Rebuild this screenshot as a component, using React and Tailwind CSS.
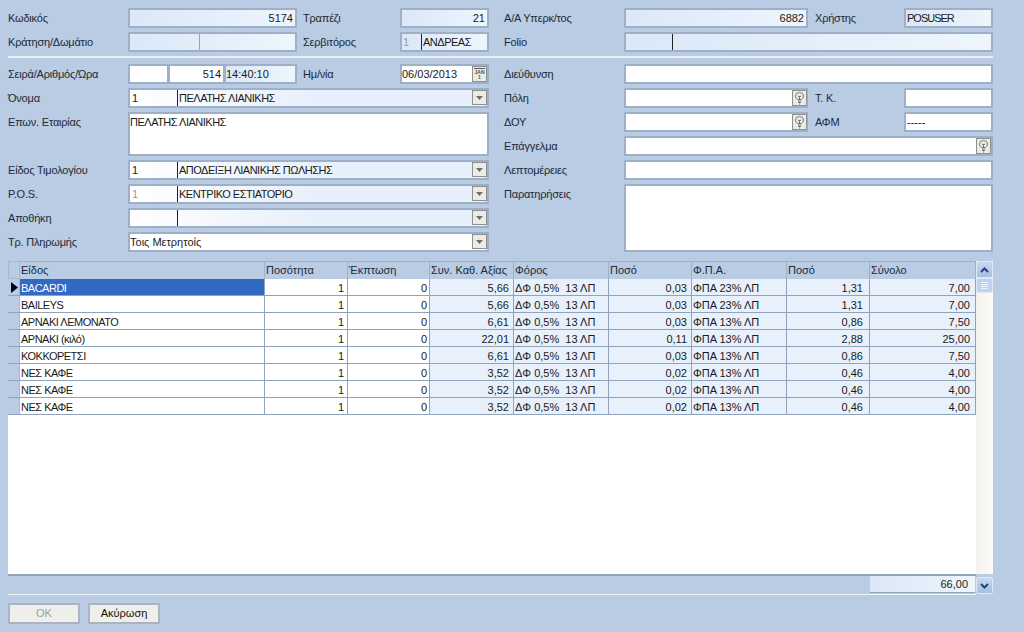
const font = "font-['Tahoma','Liberation_Sans',sans-serif]";
const caps = "tracking-[-0.5px]";

function Bulb({ offset = "right-0" }) {
  return (
    <span className={`absolute ${offset} top-0 flex h-[16px] w-[15px] items-center justify-center border border-[#8f8f8f] bg-[#ecebe4]`}>
      <svg width="9" height="13" viewBox="0 0 9 13" fill="none" stroke="#777" strokeWidth="1">
        <path d="M2.500 7.500C1 6.300.5 5.300.5 4a4 3.500 0 0 1 8 0c0 1.300-.5 2.300-2 3.500z" />
        <path d="M4.500 4v3.500M3 4l1.500 1L6 4M3 9h3M3 10.500h3M4 12h1" />
      </svg>
    </span>
  );
}

function Arrow() {
  return (
    <span className="absolute right-0 top-0 flex h-[15px] w-[15px] items-center justify-center border border-[#8f8f8f] bg-[#ecebe4]">
      <svg width="7" height="4" viewBox="0 0 7 4"><path d="M0 0h7L3.500 4z" fill="#6f6f6f" /></svg>
    </span>
  );
}

function Cal() {
  return (
    <span className="absolute right-0 top-0 flex h-[16px] w-[15px] flex-col items-center border border-[#8f8f8f] bg-[#ecebe4] pt-[1px]">
      <span className="h-px w-[11px] bg-[#555]" />
      <span className="text-[5px] font-bold leading-[6px] tracking-normal text-[#555]">JAN</span>
      <span className="text-[5px] font-bold leading-[5px] text-[#555]">1</span>
    </span>
  );
}

function Box({ w, h = "h-[20px]", bg = "bg-white", align = "text-left", children, extra = "" }) {
  return (
    <div className={`relative shrink-0 border-2 border-[#9db0c8] ${w} ${h} ${bg} ${align} ${extra} pr-[2px] leading-[16px] whitespace-nowrap text-[#1a1a1a]`}>
      {children}
    </div>
  );
}

const ro = "bg-gradient-to-r from-[#dbe8f7] to-[#eef5fd]";
const comboBg = "bg-gradient-to-r from-white via-[#e8f0fb] to-[#e8f0fb]";

function Label({ w, children, className = "" }) {
  return <div className={`shrink-0 ${w} ${className} leading-[20px] tracking-[-0.2px] text-[#202a38]`}>{children}</div>;
}

function Row({ children, className = "" }) {
  return <div className={`flex h-[20px] ${className}`}>{children}</div>;
}

function Combo({ code, gray, text }) {
  return (
    <div className={`relative flex h-[20px] w-[361px] border-2 border-[#9db0c8] ${comboBg} leading-[16px] whitespace-nowrap text-[#1a1a1a]`}>
      <span className={`w-[47px] shrink-0 pl-[2px] ${gray ? "text-[#999]" : ""}`}>{code}</span>
      <span className={`border-l border-[#222] pl-[1px] ${caps}`}>{text}</span>
      <Arrow />
    </div>
  );
}

const widths = ["w-[245px]", "w-[83px]", "w-[82px]", "w-[84px]", "w-[95px]", "w-[83px]", "w-[95px]", "w-[83px]", "w-[106px]"];
const cellPad = ["pl-[1px]", "pr-[3px] text-right", "pr-[2px] text-right", "pr-[4px] text-right", "pl-[1px]", "pr-[4px] text-right", "pl-[1px]", "pr-[6px] text-right", "pr-[5px] text-right"];
const headers = ["Είδος", "Ποσότητα", "Έκπτωση", "Συν. Καθ. Αξίας", "Φόρος", "Ποσό", "Φ.Π.Α.", "Ποσό", "Σύνολο"];
const rows = [
  ["BACARDI", "1", "0", "5,66", "ΔΦ 0,5%  13 ΛΠ", "0,03", "ΦΠΑ 23% ΛΠ", "1,31", "7,00"],
  ["BAILEYS", "1", "0", "5,66", "ΔΦ 0,5%  13 ΛΠ", "0,03", "ΦΠΑ 23% ΛΠ", "1,31", "7,00"],
  ["ΑΡΝΑΚΙ ΛΕΜΟΝΑΤΟ", "1", "0", "6,61", "ΔΦ 0,5%  13 ΛΠ", "0,03", "ΦΠΑ 13% ΛΠ", "0,86", "7,50"],
  ["ΑΡΝΑΚΙ (κιλό)", "1", "0", "22,01", "ΔΦ 0,5%  13 ΛΠ", "0,11", "ΦΠΑ 13% ΛΠ", "2,88", "25,00"],
  ["ΚΟΚΚΟΡΕΤΣΙ", "1", "0", "6,61", "ΔΦ 0,5%  13 ΛΠ", "0,03", "ΦΠΑ 13% ΛΠ", "0,86", "7,50"],
  ["ΝΕΣ ΚΑΦΕ", "1", "0", "3,52", "ΔΦ 0,5%  13 ΛΠ", "0,02", "ΦΠΑ 13% ΛΠ", "0,46", "4,00"],
  ["ΝΕΣ ΚΑΦΕ", "1", "0", "3,52", "ΔΦ 0,5%  13 ΛΠ", "0,02", "ΦΠΑ 13% ΛΠ", "0,46", "4,00"],
  ["ΝΕΣ ΚΑΦΕ", "1", "0", "3,52", "ΔΦ 0,5%  13 ΛΠ", "0,02", "ΦΠΑ 13% ΛΠ", "0,46", "4,00"],
];

function ScrollBtn({ up }) {
  return (
    <div className="flex h-[17px] w-[17px] shrink-0 items-center justify-center rounded-[2px] border border-[#dfe8f4] bg-gradient-to-b from-[#c8d8ee] to-[#a6bfe2]">
      <svg width="9" height="6" viewBox="0 0 9 6" fill="none" stroke="#24437f" strokeWidth="2">
        <path d={up ? "M1 5l3.500-3.500L8 5" : "M1 1l3.500 3.500L8 1"} />
      </svg>
    </div>
  );
}

export default function App() {
  return (
    <div className={`flex h-[632px] w-[1024px] flex-col overflow-hidden bg-[#b9cce4] pl-[8px] pt-[8px] text-[11px] ${font}`}>
      <div className="flex w-[985px] flex-col gap-[4px]">
        <Row>
          <Label w="w-[120px]">Κωδικός</Label>
          <Box w="w-[169px]" bg={ro} align="text-right">5174</Box>
          <Label w="w-[103px]" className="pl-[6px]">Τραπέζι</Label>
          <Box w="w-[89px]" bg={ro} align="text-right">21</Box>
          <Label w="w-[135px]" className="pl-[15px]">Α/Α Υπερκ/τος</Label>
          <Box w="w-[184px]" bg={ro} align="text-right">6882</Box>
          <Label w="w-[96px]" className="pl-[7px]">Χρήστης</Label>
          <Box w="w-[89px]" bg={ro} extra="pl-[1px] tracking-[-1px]">POSUSER</Box>
        </Row>
        <Row>
          <Label w="w-[120px]">Κράτηση/Δωμάτιο</Label>
          <div className={`flex h-[20px] w-[169px] shrink-0 border-2 border-[#9db0c8] ${ro}`}>
            <span className="w-[70px] border-r border-[#8fa3bb]" />
          </div>
          <Label w="w-[103px]" className="pl-[6px]">Σερβιτόρος</Label>
          <div className={`flex h-[20px] w-[89px] shrink-0 border-2 border-[#9db0c8] ${ro} leading-[16px] whitespace-nowrap`}>
            <span className="w-[19px] pl-[1px] text-[#999]">1</span>
            <span className={`border-l border-[#222] pl-[1px] text-[#1a1a1a] ${caps}`}>ΑΝΔΡΕΑΣ</span>
          </div>
          <Label w="w-[135px]" className="pl-[15px]">Folio</Label>
          <div className={`flex h-[20px] w-[369px] shrink-0 border-2 border-[#9db0c8] ${ro}`}>
            <span className="w-[47px] border-r border-[#222]" />
          </div>
        </Row>
      </div>

      <div className="mt-[4px] h-[2px] w-[985px] bg-[#e9f0f5]" />

      <div className="mt-[6px] flex w-[985px] justify-between">
        <div className="flex w-[481px] flex-col gap-[4px]">
          <Row>
            <Label w="w-[120px]">Σειρά/Αριθμός/Ώρα</Label>
            <Box w="w-[41px]" />
            <Box w="w-[57px]" align="text-right" extra="-ml-[1px]">514</Box>
            <Box w="w-[73px]" bg={ro} extra="-ml-[1px]">14:40:10</Box>
            <Label w="w-[103px]" className="pl-[6px]">Ημ/νία</Label>
            <Box w="w-[89px]">06/03/2013<Cal /></Box>
          </Row>
          <Row>
            <Label w="w-[120px]">Όνομα</Label>
            <Combo code="1" text="ΠΕΛΑΤΗΣ ΛΙΑΝΙΚΗΣ" />
          </Row>
          <div className="flex h-[44px]">
            <Label w="w-[120px]">Επων. Εταιρίας</Label>
            <Box w="w-[361px]" h="h-[44px]" extra={caps}>ΠΕΛΑΤΗΣ ΛΙΑΝΙΚΗΣ</Box>
          </div>
          <Row>
            <Label w="w-[120px]">Είδος Τιμολογίου</Label>
            <Combo code="1" text="ΑΠΟΔΕΙΞΗ ΛΙΑΝΙΚΗΣ ΠΩΛΗΣΗΣ" />
          </Row>
          <Row>
            <Label w="w-[120px]">P.O.S.</Label>
            <Combo code="1" gray text="ΚΕΝΤΡΙΚΟ ΕΣΤΙΑΤΟΡΙΟ" />
          </Row>
          <Row>
            <Label w="w-[120px]">Αποθήκη</Label>
            <Combo code="" text="" />
          </Row>
          <Row>
            <Label w="w-[120px]">Τρ. Πληρωμής</Label>
            <div className="relative h-[20px] w-[361px] border-2 border-[#9db0c8] bg-white leading-[16px] text-[#1a1a1a]">
              Τοις Μετρητοίς
              <Arrow />
            </div>
          </Row>
        </div>

        <div className="flex w-[489px] flex-col gap-[4px]">
          <Row>
            <Label w="w-[120px]">Διεύθυνση</Label>
            <Box w="w-[369px]" />
          </Row>
          <Row>
            <Label w="w-[120px]">Πόλη</Label>
            <Box w="w-[184px]"><Bulb offset="-right-px" /></Box>
            <Label w="w-[96px]" className="pl-[7px]">Τ. Κ.</Label>
            <Box w="w-[89px]" />
          </Row>
          <Row>
            <Label w="w-[120px]">ΔΟΥ</Label>
            <Box w="w-[184px]"><Bulb offset="-right-px" /></Box>
            <Label w="w-[96px]" className="pl-[7px]">ΑΦΜ</Label>
            <Box w="w-[89px]" extra="pl-[1px]">-----</Box>
          </Row>
          <Row>
            <Label w="w-[120px]">Επάγγελμα</Label>
            <Box w="w-[369px]"><Bulb /></Box>
          </Row>
          <Row>
            <Label w="w-[120px]">Λεπτομέρειες</Label>
            <Box w="w-[369px]" />
          </Row>
          <div className="flex h-[68px]">
            <Label w="w-[120px]">Παρατηρήσεις</Label>
            <Box w="w-[369px]" h="h-[68px]" />
          </div>
        </div>
      </div>

      <div className="mt-[9px] flex h-[334px] w-[985px]">
        <div className="flex w-[968px] flex-col">
          <div className="flex h-[18px] bg-[#b9cce4]">
            <div className="w-[12px] border border-[#a5b8d0] bg-[#b9cce4]" />
            {headers.map((h, i) => (
              <div key={i} className={`${widths[i]} shrink-0 border-r border-t border-[#9fb1c8] bg-[#b9cce4] pl-[1px] leading-[17px] text-[#202a38]`}>{h}</div>
            ))}
          </div>
          <div className="flex flex-1 flex-col bg-white">
            {rows.map((r, ri) => (
              <div key={ri} className="flex h-[17px] shrink-0 border-b border-[#8fa3bb]">
                <div className="flex w-[12px] items-center border-r border-[#a5b8d0] bg-[#b9cce4]">
                  {ri === 0 && (
                    <svg width="9" height="11" viewBox="0 0 9 11" className="ml-[2px]"><path d="M1 0l7 5.500-7 5.500z" fill="#000" /></svg>
                  )}
                </div>
                {r.map((c, i) => {
                  const selected = ri === 0 && i === 0;
                  const shaded = i >= 3;
                  return (
                    <div key={i} className={`${widths[i]} ${cellPad[i]} ${i === 0 ? caps : ""} shrink-0 overflow-hidden whitespace-pre border-r border-[#8fa3bb] leading-[18px] ${selected ? "bg-[#316ac5] text-white" : shaded ? "bg-[#e7f0fb] text-[#1a1a1a]" : "bg-white text-[#1a1a1a]"}`}>{c}</div>
                  );
                })}
              </div>
            ))}
          </div>
          <div className="flex h-[21px] shrink-0 justify-end border-t-2 border-b border-[#8fa3bb] border-b-[#eef3f8] bg-[#b9cce4] pr-[1px]">
            <div className="h-[17px] w-[105px] border-b border-[#8fa3bb] bg-gradient-to-r from-[#dbe8f7] to-[#eef5fd] pr-[7px] text-right leading-[16px] text-[#1a1a1a]">66,00</div>
          </div>
        </div>
        <div className="flex w-[17px] flex-col">
          <div className="flex flex-1 flex-col bg-gradient-to-r from-[#f3f2ea] to-[#fbfbf8]">
            <ScrollBtn up />
            <div className="flex h-[15px] flex-col items-center justify-center gap-[1px] rounded-[2px] border border-[#dfe8f4] bg-[#c0d3ec]">
              <span className="h-px w-[7px] bg-[#eef4fb]" />
              <span className="h-px w-[7px] bg-[#eef4fb]" />
              <span className="h-px w-[7px] bg-[#eef4fb]" />
              <span className="h-px w-[7px] bg-[#eef4fb]" />
            </div>
          </div>
          <div className="h-[21px] shrink-0 pt-[3px]">
            <ScrollBtn />
          </div>
        </div>
      </div>

      <div className="mt-[8px] flex gap-[8px]">
        <button className="h-[21px] w-[72px] border-2 border-[#a9b4c2] bg-[#eeeeea] text-[#a0a0a0]">OK</button>
        <button className="h-[21px] w-[72px] border-2 border-[#a9b4c2] bg-[#eeeeea] text-[#111]">Ακύρωση</button>
      </div>
    </div>
  );
}
